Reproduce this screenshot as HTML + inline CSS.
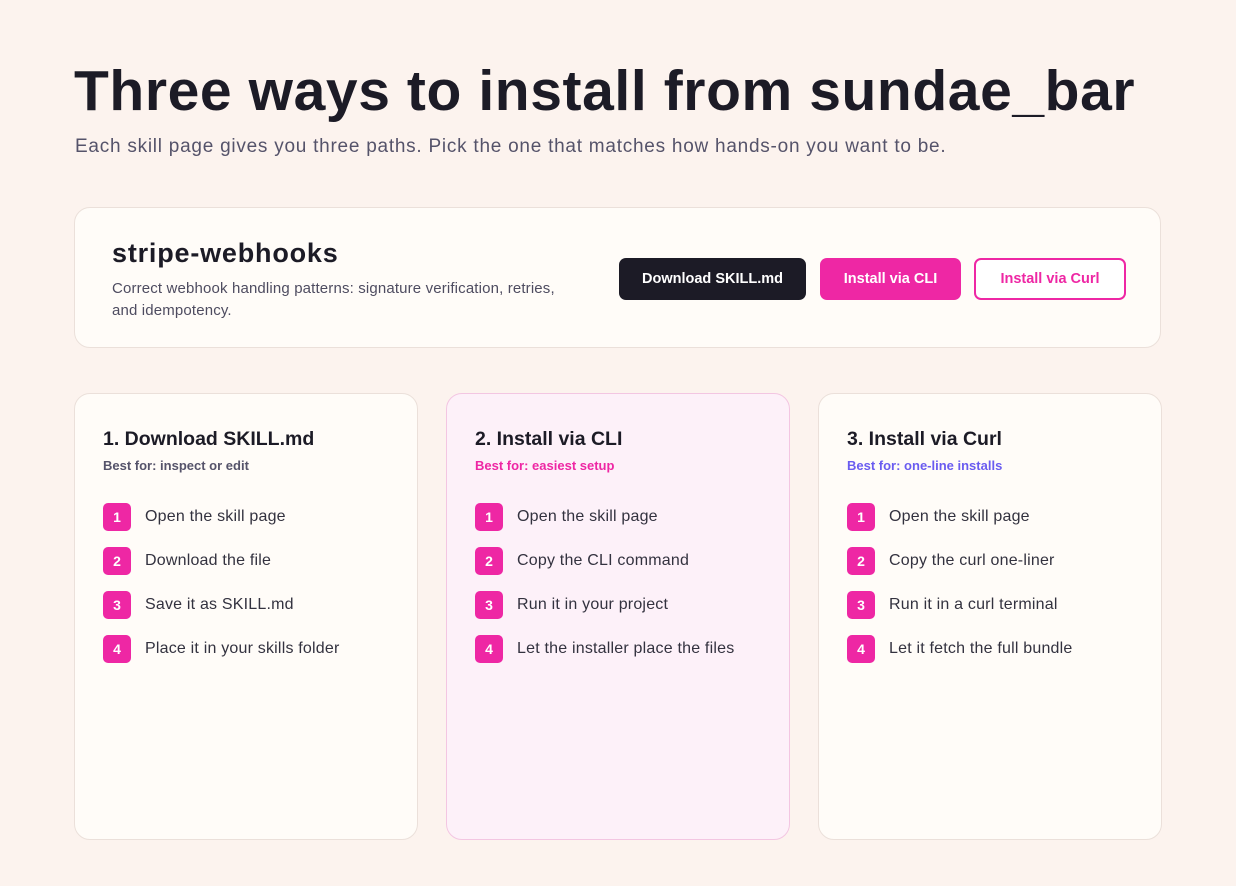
<!DOCTYPE html>
<html><head><meta charset="utf-8"><style>
*{box-sizing:border-box;margin:0;padding:0}
body{width:1236px;height:886px;background:#fcf3ee;font-family:"Liberation Sans",sans-serif;color:#1c1b26;position:relative;overflow:hidden}
h1{position:absolute;left:74px;top:58px;font-size:57px;font-weight:700;letter-spacing:0.6px;line-height:66px;white-space:nowrap}
.sub{position:absolute;left:75px;top:136px;font-size:19px;color:#55536a;letter-spacing:0.75px;white-space:nowrap}
.top{position:absolute;left:74px;top:207px;width:1087px;height:141px;background:#fffcf8;border:1px solid #ebe0da;border-radius:16px}
.top h2{position:absolute;left:37px;top:30px;font-size:27px;font-weight:700;letter-spacing:0.8px}
.top p{position:absolute;left:37px;top:70px;width:470px;font-size:15px;line-height:22px;color:#4e4c60;letter-spacing:0.15px}
.btn{position:absolute;top:50px;height:42px;border-radius:7px;font-size:14.5px;font-weight:700;display:flex;align-items:center;justify-content:center}
.b1{left:544px;width:187px;background:#1c1b26;color:#fff}
.b2{left:745px;width:141px;background:#ee27a4;color:#fff}
.b3{left:899px;width:152px;border:2px solid #ee27a4;color:#ee27a4;background:#fff}
.card{position:absolute;top:393px;width:344px;height:447px;background:#fffcf8;border:1px solid #ebe0da;border-radius:16px;padding:33px 28px}
.card.pk{background:#fdf1f9;border-color:#f3c6e2}
.card h3{font-size:19.5px;font-weight:700;letter-spacing:0;line-height:24px}
.bf{font-size:13px;font-weight:700;margin-top:7px;color:#55536a}
.pk .bf{color:#ee27a4}.pu .bf{color:#6a5cf0}
ul{list-style:none;margin-top:30px}
li{display:flex;align-items:center;height:28px;margin-bottom:16px;font-size:16px;color:#33323f;letter-spacing:0.2px}
li b{width:28px;height:28px;border-radius:5px;background:#ee27a4;color:#fff;font-size:14px;display:flex;align-items:center;justify-content:center;margin-right:14px;letter-spacing:0}
</style></head><body>
<h1>Three ways to install from sundae_bar</h1>
<div class="sub">Each skill page gives you three paths. Pick the one that matches how hands-on you want to be.</div>
<div class="top"><h2>stripe-webhooks</h2><p>Correct webhook handling patterns: signature verification, retries, and idempotency.</p>
<div class="btn b1">Download SKILL.md</div><div class="btn b2">Install via CLI</div><div class="btn b3">Install via Curl</div></div>
<div class="card" style="left:74px"><h3>1. Download SKILL.md</h3><div class="bf">Best for: inspect or edit</div>
<ul><li><b>1</b>Open the skill page</li><li><b>2</b>Download the file</li><li><b>3</b>Save it as SKILL.md</li><li><b>4</b>Place it in your skills folder</li></ul></div>
<div class="card pk" style="left:446px"><h3>2. Install via CLI</h3><div class="bf">Best for: easiest setup</div>
<ul><li><b>1</b>Open the skill page</li><li><b>2</b>Copy the CLI command</li><li><b>3</b>Run it in your project</li><li><b>4</b>Let the installer place the files</li></ul></div>
<div class="card pu" style="left:818px"><h3>3. Install via Curl</h3><div class="bf">Best for: one-line installs</div>
<ul><li><b>1</b>Open the skill page</li><li><b>2</b>Copy the curl one-liner</li><li><b>3</b>Run it in a curl terminal</li><li><b>4</b>Let it fetch the full bundle</li></ul></div>
</body></html>
